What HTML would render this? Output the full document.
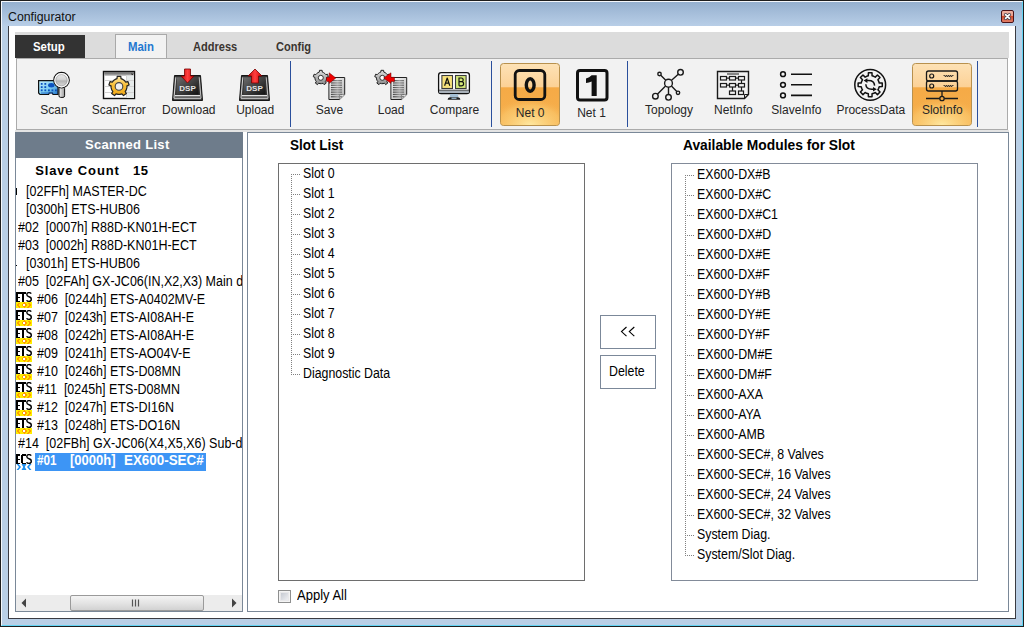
<!DOCTYPE html>
<html><head><meta charset="utf-8">
<style>
*{margin:0;padding:0;box-sizing:border-box}
html,body{width:1024px;height:627px;overflow:hidden;background:#b9cfe6;font-family:"Liberation Sans",sans-serif}
.a{position:absolute}
#win{position:absolute;left:0;top:0;width:1024px;height:627px;border:1px solid #1e1e1e;background:#b9cfe6}
#hl{position:absolute;left:1px;top:1px;width:1022px;height:625px;border-top:1px solid #f4f7fb;border-left:1px solid #f4f7fb;border-right:1px solid #62d4f4;border-bottom:1px solid #62d4f4;border-image:none}
#title{position:absolute;left:2px;top:2px;width:1020px;height:24px;background:linear-gradient(#95b0cf,#b8cee7)}
#client{position:absolute;left:8px;top:26px;width:1008px;height:593px;background:#fff;border-left:1px solid #3a3b42;border-right:1px solid #3a3b42;border-bottom:1px solid #3a3b42}
.t{position:absolute;white-space:pre;line-height:1}
.lbl{position:absolute;white-space:pre;font-size:12px;color:#262626;line-height:1;transform:translateX(-50%)}
.list{font-size:12px;color:#000}
.sep{position:absolute;width:1px;background:#2c4d96}
.li{font-size:14px;color:#000;transform:scaleX(0.882);transform-origin:0 0}
.ic{position:absolute;width:16px;height:17px;overflow:hidden}
.ic span{position:absolute;left:0;top:-1px;font:bold 11px "Liberation Sans",sans-serif;letter-spacing:-1px;transform:scaleX(0.85) scaleY(1.0);transform-origin:0 0;color:#000;line-height:1}
.ets i{position:absolute;left:0;top:10px;width:16px;height:6px;background:radial-gradient(circle at 50% 50%,#fff 0,#fff 1.4px,#ffa000 1.6px,#ffa000 2.6px,#ffea00 2.8px)}
.ecs i{position:absolute;left:0;top:10px;width:16px;height:6px;background:linear-gradient(90deg,#3aa0e8,#9fd0f5,#3aa0e8,#9fd0f5,#3aa0e8)}
.dh{position:absolute;width:9px;height:1px;background:repeating-linear-gradient(90deg,#808080 0 1px,transparent 1px 2px)}
.dv{position:absolute;width:1px;background:repeating-linear-gradient(180deg,#808080 0 1px,transparent 1px 2px)}
.btn{border:1px solid #7b8899;background:#fff}
.btn span{position:absolute;left:0;right:0;text-align:center;font-size:13px;line-height:1;color:#000}
</style></head><body>
<div id="win"></div>
<div id="hl"></div>
<div id="title"></div>
<div class="t" style="left:8px;top:11px;font-size:12.3px;color:#111">Configurator</div>
<!-- close button -->
<div class="a" style="left:1001px;top:10px;width:13px;height:13px;border:1px solid #4a1218;border-radius:2px;background:linear-gradient(#f0b3a4 0,#e99a86 45%,#cf4a2c 50%,#e0806a 100%)"></div>
<svg class="a" style="left:1001px;top:10px" width="13" height="13"><path d="M4.6 4.6L8.4 8.4M8.4 4.6L4.6 8.4" stroke="#3b3b4a" stroke-width="3.2" stroke-linecap="round"/><path d="M4.6 4.6L8.4 8.4M8.4 4.6L4.6 8.4" stroke="#fff" stroke-width="1.7" stroke-linecap="round"/></svg>

<div id="client"></div>

<!-- tab strip -->
<div class="a" style="left:15px;top:32px;width:994px;height:26px;background:#dcdcdc"></div>
<div class="a" style="left:15px;top:35px;width:70px;height:23px;background:#333"></div>
<div class="t" style="left:33px;top:41px;font-size:12px;font-weight:bold;color:#fff;transform:scaleX(0.95);transform-origin:0 0">Setup</div>
<div class="a" style="left:115px;top:34px;width:52px;height:25px;background:#f2f2f2;border:1px solid #a9a9a9;border-bottom:none"></div>
<div class="t" style="left:128px;top:41px;font-size:12px;font-weight:bold;color:#1f78d0;transform:scaleX(0.95);transform-origin:0 0">Main</div>
<div class="t" style="left:193px;top:41px;font-size:12px;font-weight:bold;color:#3a3530;transform:scaleX(0.92);transform-origin:0 0">Address</div>
<div class="t" style="left:276px;top:41px;font-size:12px;font-weight:bold;color:#3a3530;transform:scaleX(0.92);transform-origin:0 0">Config</div>

<!-- toolbar -->
<div class="a" style="left:16px;top:58px;width:992px;height:72px;background:#f2f2f2;border:1px solid #ababab"></div>
<div class="a" style="left:15px;top:130px;width:994px;height:2px;background:#e4e4e4"></div>

<svg class="a" style="left:0;top:0" width="1024" height="135" viewBox="0 0 1024 135">
<defs>
 <linearGradient id="card" x1="0" y1="0" x2="1" y2="1"><stop offset="0" stop-color="#c6f0fc"/><stop offset="0.55" stop-color="#7cccf0"/><stop offset="1" stop-color="#1f6fc8"/></linearGradient>
 <linearGradient id="lens" x1="0" y1="0" x2="0" y2="1"><stop offset="0" stop-color="#f4f4f4"/><stop offset="0.45" stop-color="#d4d4d4"/><stop offset="0.55" stop-color="#b4b4b4"/><stop offset="1" stop-color="#e8e8e8"/></linearGradient>
 <linearGradient id="hdl" x1="0" y1="0" x2="1" y2="0"><stop offset="0" stop-color="#f4f4f4"/><stop offset="1" stop-color="#9a9a9a"/></linearGradient>
 <linearGradient id="gearo" x1="0" y1="0" x2="0" y2="1"><stop offset="0" stop-color="#ffe9a8"/><stop offset="0.45" stop-color="#f8bf38"/><stop offset="1" stop-color="#f0a818"/></linearGradient>
 <linearGradient id="hdr" x1="0" y1="0" x2="0" y2="1"><stop offset="0" stop-color="#5a5a5a"/><stop offset="1" stop-color="#bdbdbd"/></linearGradient>
 <linearGradient id="key" x1="0" y1="0" x2="1" y2="1"><stop offset="0" stop-color="#6e6e6e"/><stop offset="0.55" stop-color="#3c3c3c"/><stop offset="1" stop-color="#101010"/></linearGradient>
 <linearGradient id="arr" x1="0" y1="0" x2="1" y2="0"><stop offset="0" stop-color="#c00000"/><stop offset="0.5" stop-color="#ff4040"/><stop offset="1" stop-color="#d00000"/></linearGradient>
 <linearGradient id="gearg" x1="0" y1="0" x2="0" y2="1"><stop offset="0" stop-color="#e0e0e0"/><stop offset="1" stop-color="#8a8a8a"/></linearGradient>
 <linearGradient id="doc" x1="0" y1="0" x2="1" y2="1"><stop offset="0" stop-color="#ffffff"/><stop offset="1" stop-color="#b0b0b0"/></linearGradient>
 <linearGradient id="lines" x1="0" y1="0" x2="1" y2="0"><stop offset="0" stop-color="#444"/><stop offset="0.6" stop-color="#999"/><stop offset="1" stop-color="#666"/></linearGradient>
 <linearGradient id="orng" x1="0" y1="0" x2="0" y2="1"><stop offset="0" stop-color="#fde2b6"/><stop offset="0.38" stop-color="#fcd196"/><stop offset="0.39" stop-color="#f5aa46"/><stop offset="1" stop-color="#f6b04e"/></linearGradient>
 <radialGradient id="glow" cx="0.5" cy="1" r="0.75"><stop offset="0" stop-color="#ffe8a0" stop-opacity="1"/><stop offset="0.7" stop-color="#fcd27a" stop-opacity="0.45"/><stop offset="1" stop-color="#f5aa46" stop-opacity="0"/></radialGradient>
</defs>
<!-- separators -->
<g fill="#2a4f9c"><rect x="290" y="61" width="1" height="66"/><rect x="491" y="61" width="1" height="66"/><rect x="627" y="61" width="1" height="66"/><rect x="977" y="61" width="1" height="66"/></g>

<!-- Scan -->
<g>
 <path d="M38.6 80.6 H58 V94.5 H53 L52.3 93 H49.3 L48.6 94.5 H40 L38.6 93 Z" fill="url(#card)" stroke="#111" stroke-width="1.2"/>
 <g fill="#0a52c0"><rect x="40.8" y="83" width="1.8" height="1.8"/><rect x="40.8" y="86.2" width="1.8" height="1.8"/><rect x="40.8" y="89.4" width="1.8" height="1.8"/><rect x="44.4" y="83" width="1.8" height="1.8"/><rect x="44.4" y="86.2" width="1.8" height="1.8"/><rect x="44.4" y="89.4" width="1.8" height="1.8"/><ellipse cx="51.3" cy="85.3" rx="3.2" ry="2.2"/><rect x="48" y="89.4" width="1.8" height="1.8"/><rect x="51.5" y="89.4" width="1.8" height="1.8"/><rect x="55" y="89.4" width="1.8" height="1.8"/><rect x="41" y="92.3" width="12" height="1.5" opacity="0.5"/></g>
 <rect x="59" y="87" width="5.6" height="10.4" rx="1.6" fill="url(#hdl)" stroke="#111" stroke-width="1"/>
 <circle cx="61.5" cy="80.2" r="7.8" fill="url(#lens)" stroke="#151515" stroke-width="1.1"/>
 <circle cx="61.5" cy="80.2" r="6.6" fill="none" stroke="#fafafa" stroke-width="1.2"/>
 <circle cx="61.5" cy="80.2" r="5.6" fill="none" stroke="#9a9a9a" stroke-width="0.6"/>
</g>

<!-- ScanError -->
<g>
 <rect x="103.5" y="71.5" width="31" height="27" fill="#fff" stroke="#111" stroke-width="1.4"/>
 <rect x="104.2" y="72.2" width="29.6" height="3.6" fill="url(#hdr)"/>
 <rect x="126.5" y="75.5" width="7.5" height="22.5" fill="#e6eaea"/>
 <g stroke="#d2d2d2" stroke-width="1"><path d="M104 80.5H134M104 86.5H134M104 92.5H134M126.5 75V98"/></g>
 <path d="M131.5 73.5 l1.5 1.5 m0 -1.5 l-1.5 1.5" stroke="#222" stroke-width="0.8"/>
 <path d="M115.15 79.39 L117.01 78.65 L117.21 76.36 L120.79 76.36 L120.99 78.65 L122.85 79.39 L124.48 80.57 L125.75 82.11 L128.00 81.60 L129.10 84.99 L126.98 85.90 L126.86 87.90 L126.24 89.81 L125.16 91.50 L126.35 93.48 L123.46 95.57 L121.94 93.84 L120.00 94.34 L118.00 94.34 L116.06 93.84 L114.54 95.57 L111.65 93.48 L112.84 91.50 L111.76 89.81 L111.14 87.90 L111.02 85.90 L108.90 84.99 L110.00 81.60 L112.25 82.11 L113.52 80.57 Z" fill="url(#gearo)" stroke="#222" stroke-width="1.2" stroke-linejoin="round"/>
 <circle cx="119" cy="86.4" r="3.8" fill="#f0f0f0" stroke="#444" stroke-width="1.1"/>
</g>

<!-- Download keycap -->
<g id="kc">
 <path d="M172.5 100.5 L174.5 75.5 H200.5 L202.5 100.5 Z" fill="#333" stroke="#151515" stroke-width="1"/>
 <path d="M175.8 77.2 L174 98.2" stroke="#d0d0d0" stroke-width="1.1"/>
 <path d="M199.2 77.2 L201 98.2" stroke="#bdbdbd" stroke-width="1.1"/>
 <rect x="175" y="95" width="25" height="1.4" fill="#e2e2e2"/>
 <rect x="174" y="97.6" width="27" height="1.6" fill="#b4b4b4"/>
 <path d="M177 77.3 H198 L198.6 94.6 H176.4 Z" fill="url(#key)"/>
 <text x="187.5" y="91" font-family="Liberation Sans" font-weight="bold" font-size="8" fill="#e4e4e4" text-anchor="middle">DSP</text>
</g>
<path d="M184.5 69 H190.5 V76 H194 L187.5 83 L181 76 H184.5 Z" fill="url(#arr)" stroke="#700" stroke-width="0.8"/>

<!-- Upload keycap -->
<g transform="translate(67 0)">
 <path d="M172.5 100.5 L174.5 75.5 H200.5 L202.5 100.5 Z" fill="#333" stroke="#151515" stroke-width="1"/>
 <path d="M175.8 77.2 L174 98.2" stroke="#d0d0d0" stroke-width="1.1"/>
 <path d="M199.2 77.2 L201 98.2" stroke="#bdbdbd" stroke-width="1.1"/>
 <rect x="175" y="95" width="25" height="1.4" fill="#e2e2e2"/>
 <rect x="174" y="97.6" width="27" height="1.6" fill="#b4b4b4"/>
 <path d="M177 77.3 H198 L198.6 94.6 H176.4 Z" fill="url(#key)"/>
 <text x="187.5" y="91" font-family="Liberation Sans" font-weight="bold" font-size="8" fill="#e4e4e4" text-anchor="middle">DSP</text>
</g>
<path d="M251.5 83 H258.5 V76 H262 L255 69 L248 76 H251.5 Z" fill="url(#arr)" stroke="#700" stroke-width="0.8"/>

<!-- Save -->
<g>
 <path d="M317.96 72.63 L319.33 72.09 L319.47 70.32 L322.13 70.32 L322.27 72.09 L323.64 72.63 L324.84 73.50 L325.78 74.64 L327.51 74.22 L328.33 76.75 L326.69 77.43 L326.60 78.91 L326.14 80.31 L325.35 81.56 L326.27 83.07 L324.12 84.64 L322.97 83.29 L321.54 83.65 L320.06 83.65 L318.63 83.29 L317.48 84.64 L315.33 83.07 L316.25 81.56 L315.46 80.31 L315.00 78.91 L314.91 77.43 L313.27 76.75 L314.09 74.22 L315.82 74.64 L316.76 73.50 Z" fill="url(#gearg)" stroke="#222" stroke-width="1" stroke-linejoin="round"/>
 <circle cx="320.8" cy="77.8" r="2.5" fill="#fff" stroke="#222" stroke-width="0.9"/>
 <path d="M328.9 77.5 H344.7 V94.6 L339.59999999999997 99.5 H328.9 Z" fill="url(#doc)" stroke="#222" stroke-width="1"/>
 <path d="M339.59999999999997 99.5 V94.6 H344.7" fill="#e8e8e8" stroke="#555" stroke-width="0.6"/>
 <g fill="url(#lines)"><rect x="330.9" y="80.0" width="11" height="1.3"/><rect x="330.9" y="82.3" width="11" height="1.3"/><rect x="330.9" y="84.6" width="11" height="1.3"/><rect x="330.9" y="86.9" width="11" height="1.3"/><rect x="330.9" y="89.2" width="11" height="1.3"/><rect x="330.9" y="91.5" width="11" height="1.3"/><rect x="330.9" y="93.8" width="11" height="1.3"/><rect x="330.9" y="96.1" width="11" height="1.3"/></g>
 <path d="M326.5 77.3 H329.2 V72.8 L335.8 78 L329.2 83.4 V81.5 H326.5 Z" fill="#ee0000" stroke="#600" stroke-width="0.5"/>
</g>

<!-- Load -->
<g>
 <path d="M379.46 72.63 L380.83 72.09 L380.97 70.32 L383.63 70.32 L383.77 72.09 L385.14 72.63 L386.34 73.50 L387.28 74.64 L389.01 74.22 L389.83 76.75 L388.19 77.43 L388.10 78.91 L387.64 80.31 L386.85 81.56 L387.77 83.07 L385.62 84.64 L384.47 83.29 L383.04 83.65 L381.56 83.65 L380.13 83.29 L378.98 84.64 L376.83 83.07 L377.75 81.56 L376.96 80.31 L376.50 78.91 L376.41 77.43 L374.77 76.75 L375.59 74.22 L377.32 74.64 L378.26 73.50 Z" fill="url(#gearg)" stroke="#222" stroke-width="1" stroke-linejoin="round"/>
 <circle cx="382.3" cy="77.8" r="2.5" fill="#fff" stroke="#222" stroke-width="0.9"/>
 <path d="M390.9 77.5 H406.7 V94.6 L401.59999999999997 99.5 H390.9 Z" fill="url(#doc)" stroke="#222" stroke-width="1"/>
 <path d="M401.59999999999997 99.5 V94.6 H406.7" fill="#e8e8e8" stroke="#555" stroke-width="0.6"/>
 <g fill="url(#lines)"><rect x="392.9" y="80.0" width="11" height="1.3"/><rect x="392.9" y="82.3" width="11" height="1.3"/><rect x="392.9" y="84.6" width="11" height="1.3"/><rect x="392.9" y="86.9" width="11" height="1.3"/><rect x="392.9" y="89.2" width="11" height="1.3"/><rect x="392.9" y="91.5" width="11" height="1.3"/><rect x="392.9" y="93.8" width="11" height="1.3"/><rect x="392.9" y="96.1" width="11" height="1.3"/></g>
 <path d="M394.5 77.3 H391 V72.8 L383.6 78 L391 83.4 V81.5 H394.5 Z" fill="#ee0000" stroke="#600" stroke-width="0.5"/>
</g>

<!-- Compare -->
<g>
 <rect x="438.6" y="72.6" width="30.8" height="21" rx="2.6" fill="#fff" stroke="#111" stroke-width="1.3"/>
 <rect x="439.3" y="90.4" width="29.4" height="2.6" fill="#a9b1b9"/>
 <path d="M439 90.2 H469" stroke="#222" stroke-width="0.8"/>
 <rect x="441.9" y="75.5" width="10.6" height="13" fill="#f7e27c" stroke="#3a3a3a" stroke-width="1.1"/>
 <rect x="455.5" y="75.5" width="10.6" height="13" fill="#d3e87a" stroke="#3a3a3a" stroke-width="1.1"/>
 <path d="M444.6 85.8 L447.2 78 L449.8 85.8 M445.5 83.2 H448.9" stroke="#111" stroke-width="1.2" fill="none" stroke-linejoin="round"/>
 <path d="M459 85.8 V78 H461.3 Q463.2 78 463.2 79.9 Q463.2 81.7 461.3 81.7 H459 M461.3 81.7 Q463.6 81.7 463.6 83.7 Q463.6 85.8 461.3 85.8 H459" stroke="#111" stroke-width="1.2" fill="none"/>
 <path d="M450.3 94 H457.8 L458.6 97.5 H449.5 Z" fill="#a6c0d4"/>
 <path d="M447.6 99.8 Q447.6 97.3 450 97.3 H458 Q460.4 97.3 460.4 99.8 Z" fill="#1e1e1e"/>
 <rect x="451.5" y="97.6" width="5" height="1.4" fill="#8ea8bc"/>
</g>

<!-- Net 0 button -->
<rect x="500.5" y="63.5" width="59" height="62" rx="3" fill="url(#orng)" stroke="#b8914e" stroke-width="1"/>
<rect x="501" y="88" width="58" height="37" rx="2" fill="url(#glow)"/>
<rect x="515.2" y="70.5" width="29.6" height="29" rx="4" fill="none" stroke="#111" stroke-width="2.8"/>
<ellipse cx="530.2" cy="85" rx="3.9" ry="6.3" fill="none" stroke="#111" stroke-width="3.4"/>

<!-- Net 1 -->
<rect x="577.5" y="70.5" width="29.5" height="29.5" rx="2.5" fill="none" stroke="#111" stroke-width="3"/>
<path d="M591.6 75.3 H596.7 V95.9 H591.6 V81.5 Q589 82.6 586 83 V78.6 Q589.5 77.6 591.6 75.3 Z" fill="#111"/>

<!-- Topology -->
<g stroke="#1a1a1a" stroke-width="1.4" fill="none">
 <path d="M668.5 83 L680.5 72.3 M668.5 83 L659.5 74 M668.5 83 L655.4 96.2 M668.5 83 L668.5 97.3 M668.5 83 L678 92.8"/>
 <circle cx="668.5" cy="83.2" r="3.9" fill="#f2f2f2"/>
 <circle cx="680.5" cy="72.3" r="2.8" fill="#f2f2f2"/>
 <circle cx="659.5" cy="74" r="1.7" fill="#f2f2f2"/>
 <circle cx="655.4" cy="96.2" r="2.8" fill="#f2f2f2"/>
 <circle cx="668.5" cy="97.3" r="2.8" fill="#f2f2f2"/>
 <circle cx="678" cy="92.8" r="1.7" fill="#f2f2f2"/>
</g>

<!-- NetInfo -->
<g stroke="#1a1a1a" fill="none">
 <path d="M717.5 71.5 H748.5 V94.5 L744.5 98.5 H717.5 Z" stroke-width="1.4"/>
 <path d="M744.5 98.5 V94.5 H748.5" stroke-width="1"/>
 <g stroke-width="1.2">
  <rect x="720.5" y="76.5" width="6" height="3.5"/><rect x="729.5" y="76.5" width="6" height="3.5"/><rect x="738.5" y="76.5" width="6" height="3.5"/>
  <rect x="720.5" y="83.5" width="6" height="3.5"/><rect x="729.5" y="83.5" width="6" height="3.5"/><rect x="738.5" y="83.5" width="6" height="3.5"/>
  <rect x="729.5" y="91" width="6" height="3.5"/><rect x="738.5" y="91" width="5" height="3.5"/>
  <path d="M726.5 78.2H729.5M735.5 78.2H738.5M726.5 85.2H729.5M735.5 85.2H738.5M741.5 80V83.5M732.5 87V91M741.5 87V91M727 74H739"/>
 </g>
</g>

<!-- SlaveInfo -->
<g stroke="#111" stroke-width="1.5" fill="none">
 <circle cx="783" cy="74.2" r="2.4"/><circle cx="783" cy="84.8" r="2.4"/><circle cx="783" cy="95.4" r="2.4"/>
 <path d="M791 74.2H812M791 84.8H812M791 95.4H812" stroke-width="1.6"/>
</g>

<!-- ProcessData -->
<g stroke="#111" fill="none">
 <circle cx="870.2" cy="84.8" r="15.4" stroke-width="1.5"/>
 <path d="M866.68 76.30 L868.33 75.79 L868.39 72.74 L872.01 72.74 L872.07 75.79 L873.72 76.30 L875.25 77.11 L877.45 74.99 L880.01 77.55 L877.89 79.75 L878.70 81.28 L879.21 82.93 L882.26 82.99 L882.26 86.61 L879.21 86.67 L878.70 88.32 L877.89 89.85 L880.01 92.05 L877.45 94.61 L875.25 92.49 L873.72 93.30 L872.07 93.81 L872.01 96.86 L868.39 96.86 L868.33 93.81 L866.68 93.30 L865.15 92.49 L862.95 94.61 L860.39 92.05 L862.51 89.85 L861.70 88.32 L861.19 86.67 L858.14 86.61 L858.14 82.99 L861.19 82.93 L861.70 81.28 L862.51 79.75 L860.39 77.55 L862.95 74.99 L865.15 77.11 Z" stroke-width="1.5" stroke-linejoin="round"/>
 <path d="M874.6 85.6 Q874.3 80.6 868.6 80.6 H866.5" stroke-width="1.5"/>
 <path d="M865.8 84.2 Q866.1 89.2 871.8 89.2 H873.9" stroke-width="1.5"/>
 <path d="M863.6 80.6 L867.4 78.3 V82.9 Z M876.8 89.2 L873 86.9 V91.5 Z" fill="#111" stroke="none"/>
</g>

<!-- SlotInfo button -->
<rect x="912.5" y="63.5" width="59" height="62" rx="3" fill="url(#orng)" stroke="#b8914e" stroke-width="1"/>
<rect x="913" y="88" width="58" height="37" rx="2" fill="url(#glow)"/>
<g stroke="#1a1a1a" fill="none" stroke-width="1.3">
 <rect x="926.5" y="71" width="31" height="10" rx="2"/>
 <rect x="926.5" y="81" width="31" height="10" rx="2"/>
 <circle cx="931.7" cy="76" r="2" stroke-width="1.2"/><circle cx="931.7" cy="86" r="2" stroke-width="1.2"/>
 <path d="M943.5 76 l1 -1 l1 2 l1 -2 l1 2 l1 -2 l1 2 l1 -2 l1 2 l1 -2 l1 1 M943.5 86 l1 -1 l1 2 l1 -2 l1 2 l1 -2 l1 2 l1 -2 l1 2 l1 -2 l1 1" stroke-width="0.8"/>
 <path d="M942 91V96M926 98.5H939.7M944.3 98.5H958"/>
 <circle cx="942" cy="98.5" r="2.2"/>
</g>
</svg>


<!-- scanned list -->
<div class="a" style="left:15px;top:132px;width:228px;height:480px;border:1px solid #7a8898;background:#fff"></div>
<div class="a" style="left:15px;top:132px;width:228px;height:26px;background:#6e7c8b"></div>
<div class="t" style="left:85px;top:138px;font-size:13px;font-weight:bold;color:#fff;letter-spacing:0.3px">Scanned List</div>

<!-- right panel -->
<div class="a" style="left:247px;top:132px;width:762px;height:480px;border:1px solid #7a8898;background:#fff"></div>

<div class="lbl" style="left:53.9px;top:104px">Scan</div>
<div class="lbl" style="left:118.8px;top:104px">ScanError</div>
<div class="lbl" style="left:188.8px;top:104px">Download</div>
<div class="lbl" style="left:255.2px;top:104px">Upload</div>
<div class="lbl" style="left:329.5px;top:104px">Save</div>
<div class="lbl" style="left:391.1px;top:104px">Load</div>
<div class="lbl" style="left:454.5px;top:104px">Compare</div>
<div class="lbl" style="left:530.2px;top:107px">Net 0</div>
<div class="lbl" style="left:591.5px;top:107px">Net 1</div>
<div class="lbl" style="left:669px;top:104px">Topology</div>
<div class="lbl" style="left:733.4px;top:104px">NetInfo</div>
<div class="lbl" style="left:796.4px;top:104px">SlaveInfo</div>
<div class="lbl" style="left:870.8px;top:104px">ProcessData</div>
<div class="lbl" style="left:942.3px;top:104px">SlotInfo</div>
<div class="a" style="left:16px;top:133px;width:226px;height:462px;overflow:hidden">
<div class="t" style="left:19.2px;top:31px;font-size:13px;font-weight:bold;color:#000;letter-spacing:0.85px">Slave Count</div><div class="t" style="left:117px;top:31px;font-size:13px;font-weight:bold;color:#000;letter-spacing:0.5px">15</div>
<div class="t li" style="left:10.4px;top:51px;color:#000;transform:scaleX(0.893)">[02FFh] MASTER-DC</div>
<div class="t li" style="left:10.4px;top:69px;color:#000;transform:scaleX(0.893)">[0300h] ETS-HUB06</div>
<div class="t li" style="left:2px;top:87px;color:#000;transform:scaleX(0.893)">#02  [0007h] R88D-KN01H-ECT</div>
<div class="t li" style="left:2px;top:105px;color:#000;transform:scaleX(0.893)">#03  [0002h] R88D-KN01H-ECT</div>
<div class="t li" style="left:10.4px;top:123px;color:#000;transform:scaleX(0.893)">[0301h] ETS-HUB06</div>
<div class="t li" style="left:2px;top:141px;color:#000;transform:scaleX(0.893)">#05  [02FAh] GX-JC06(IN,X2,X3) Main device</div>
<svg class="a" style="left:0;top:159px" width="16" height="16" shape-rendering="crispEdges"><g fill="#000"><rect x="0" y="0" width="2" height="10"/><rect x="0" y="0" width="4" height="1.5"/><rect x="0" y="4.5" width="3.5" height="1"/><rect x="0" y="8.5" width="4" height="1.5"/><rect x="4" y="0" width="6" height="1.5"/><rect x="6" y="0" width="2" height="10"/></g><path d="M15.2 1.6 Q14.6 0.6 13 0.6 Q10.8 0.6 10.8 2.6 Q10.8 4.3 13 4.8 Q15.3 5.3 15.3 7.3 Q15.3 9.4 13 9.4 Q11.2 9.4 10.6 8.2" fill="none" stroke="#000" stroke-width="1.4" shape-rendering="auto"/><g></g><rect x="0" y="10" width="16" height="6" fill="#ffee00"/><g fill="#ffa000"><path d="M3 10.5 L1 13 L3 15.5 H4.5 L2.5 13 L4.5 10.5Z"/><path d="M8 10 L11 13 L8 16 L5 13Z"/><path d="M13 10.5 L15 13 L13 15.5 H11.5 L13.5 13 L11.5 10.5Z"/></g><rect x="7" y="12" width="2" height="2" fill="#fff"/></svg>
<div class="t li" style="left:21px;top:159px;color:#000;transform:scaleX(0.893)">#06  [0244h] ETS-A0402MV-E</div>
<svg class="a" style="left:0;top:177px" width="16" height="16" shape-rendering="crispEdges"><g fill="#000"><rect x="0" y="0" width="2" height="10"/><rect x="0" y="0" width="4" height="1.5"/><rect x="0" y="4.5" width="3.5" height="1"/><rect x="0" y="8.5" width="4" height="1.5"/><rect x="4" y="0" width="6" height="1.5"/><rect x="6" y="0" width="2" height="10"/></g><path d="M15.2 1.6 Q14.6 0.6 13 0.6 Q10.8 0.6 10.8 2.6 Q10.8 4.3 13 4.8 Q15.3 5.3 15.3 7.3 Q15.3 9.4 13 9.4 Q11.2 9.4 10.6 8.2" fill="none" stroke="#000" stroke-width="1.4" shape-rendering="auto"/><g></g><rect x="0" y="10" width="16" height="6" fill="#ffee00"/><g fill="#ffa000"><path d="M3 10.5 L1 13 L3 15.5 H4.5 L2.5 13 L4.5 10.5Z"/><path d="M8 10 L11 13 L8 16 L5 13Z"/><path d="M13 10.5 L15 13 L13 15.5 H11.5 L13.5 13 L11.5 10.5Z"/></g><rect x="7" y="12" width="2" height="2" fill="#fff"/></svg>
<div class="t li" style="left:21px;top:177px;color:#000;transform:scaleX(0.893)">#07  [0243h] ETS-AI08AH-E</div>
<svg class="a" style="left:0;top:195px" width="16" height="16" shape-rendering="crispEdges"><g fill="#000"><rect x="0" y="0" width="2" height="10"/><rect x="0" y="0" width="4" height="1.5"/><rect x="0" y="4.5" width="3.5" height="1"/><rect x="0" y="8.5" width="4" height="1.5"/><rect x="4" y="0" width="6" height="1.5"/><rect x="6" y="0" width="2" height="10"/></g><path d="M15.2 1.6 Q14.6 0.6 13 0.6 Q10.8 0.6 10.8 2.6 Q10.8 4.3 13 4.8 Q15.3 5.3 15.3 7.3 Q15.3 9.4 13 9.4 Q11.2 9.4 10.6 8.2" fill="none" stroke="#000" stroke-width="1.4" shape-rendering="auto"/><g></g><rect x="0" y="10" width="16" height="6" fill="#ffee00"/><g fill="#ffa000"><path d="M3 10.5 L1 13 L3 15.5 H4.5 L2.5 13 L4.5 10.5Z"/><path d="M8 10 L11 13 L8 16 L5 13Z"/><path d="M13 10.5 L15 13 L13 15.5 H11.5 L13.5 13 L11.5 10.5Z"/></g><rect x="7" y="12" width="2" height="2" fill="#fff"/></svg>
<div class="t li" style="left:21px;top:195px;color:#000;transform:scaleX(0.893)">#08  [0242h] ETS-AI08AH-E</div>
<svg class="a" style="left:0;top:213px" width="16" height="16" shape-rendering="crispEdges"><g fill="#000"><rect x="0" y="0" width="2" height="10"/><rect x="0" y="0" width="4" height="1.5"/><rect x="0" y="4.5" width="3.5" height="1"/><rect x="0" y="8.5" width="4" height="1.5"/><rect x="4" y="0" width="6" height="1.5"/><rect x="6" y="0" width="2" height="10"/></g><path d="M15.2 1.6 Q14.6 0.6 13 0.6 Q10.8 0.6 10.8 2.6 Q10.8 4.3 13 4.8 Q15.3 5.3 15.3 7.3 Q15.3 9.4 13 9.4 Q11.2 9.4 10.6 8.2" fill="none" stroke="#000" stroke-width="1.4" shape-rendering="auto"/><g></g><rect x="0" y="10" width="16" height="6" fill="#ffee00"/><g fill="#ffa000"><path d="M3 10.5 L1 13 L3 15.5 H4.5 L2.5 13 L4.5 10.5Z"/><path d="M8 10 L11 13 L8 16 L5 13Z"/><path d="M13 10.5 L15 13 L13 15.5 H11.5 L13.5 13 L11.5 10.5Z"/></g><rect x="7" y="12" width="2" height="2" fill="#fff"/></svg>
<div class="t li" style="left:21px;top:213px;color:#000;transform:scaleX(0.893)">#09  [0241h] ETS-AO04V-E</div>
<svg class="a" style="left:0;top:231px" width="16" height="16" shape-rendering="crispEdges"><g fill="#000"><rect x="0" y="0" width="2" height="10"/><rect x="0" y="0" width="4" height="1.5"/><rect x="0" y="4.5" width="3.5" height="1"/><rect x="0" y="8.5" width="4" height="1.5"/><rect x="4" y="0" width="6" height="1.5"/><rect x="6" y="0" width="2" height="10"/></g><path d="M15.2 1.6 Q14.6 0.6 13 0.6 Q10.8 0.6 10.8 2.6 Q10.8 4.3 13 4.8 Q15.3 5.3 15.3 7.3 Q15.3 9.4 13 9.4 Q11.2 9.4 10.6 8.2" fill="none" stroke="#000" stroke-width="1.4" shape-rendering="auto"/><g></g><rect x="0" y="10" width="16" height="6" fill="#ffee00"/><g fill="#ffa000"><path d="M3 10.5 L1 13 L3 15.5 H4.5 L2.5 13 L4.5 10.5Z"/><path d="M8 10 L11 13 L8 16 L5 13Z"/><path d="M13 10.5 L15 13 L13 15.5 H11.5 L13.5 13 L11.5 10.5Z"/></g><rect x="7" y="12" width="2" height="2" fill="#fff"/></svg>
<div class="t li" style="left:21px;top:231px;color:#000;transform:scaleX(0.893)">#10  [0246h] ETS-D08MN</div>
<svg class="a" style="left:0;top:249px" width="16" height="16" shape-rendering="crispEdges"><g fill="#000"><rect x="0" y="0" width="2" height="10"/><rect x="0" y="0" width="4" height="1.5"/><rect x="0" y="4.5" width="3.5" height="1"/><rect x="0" y="8.5" width="4" height="1.5"/><rect x="4" y="0" width="6" height="1.5"/><rect x="6" y="0" width="2" height="10"/></g><path d="M15.2 1.6 Q14.6 0.6 13 0.6 Q10.8 0.6 10.8 2.6 Q10.8 4.3 13 4.8 Q15.3 5.3 15.3 7.3 Q15.3 9.4 13 9.4 Q11.2 9.4 10.6 8.2" fill="none" stroke="#000" stroke-width="1.4" shape-rendering="auto"/><g></g><rect x="0" y="10" width="16" height="6" fill="#ffee00"/><g fill="#ffa000"><path d="M3 10.5 L1 13 L3 15.5 H4.5 L2.5 13 L4.5 10.5Z"/><path d="M8 10 L11 13 L8 16 L5 13Z"/><path d="M13 10.5 L15 13 L13 15.5 H11.5 L13.5 13 L11.5 10.5Z"/></g><rect x="7" y="12" width="2" height="2" fill="#fff"/></svg>
<div class="t li" style="left:21px;top:249px;color:#000;transform:scaleX(0.893)">#11  [0245h] ETS-D08MN</div>
<svg class="a" style="left:0;top:267px" width="16" height="16" shape-rendering="crispEdges"><g fill="#000"><rect x="0" y="0" width="2" height="10"/><rect x="0" y="0" width="4" height="1.5"/><rect x="0" y="4.5" width="3.5" height="1"/><rect x="0" y="8.5" width="4" height="1.5"/><rect x="4" y="0" width="6" height="1.5"/><rect x="6" y="0" width="2" height="10"/></g><path d="M15.2 1.6 Q14.6 0.6 13 0.6 Q10.8 0.6 10.8 2.6 Q10.8 4.3 13 4.8 Q15.3 5.3 15.3 7.3 Q15.3 9.4 13 9.4 Q11.2 9.4 10.6 8.2" fill="none" stroke="#000" stroke-width="1.4" shape-rendering="auto"/><g></g><rect x="0" y="10" width="16" height="6" fill="#ffee00"/><g fill="#ffa000"><path d="M3 10.5 L1 13 L3 15.5 H4.5 L2.5 13 L4.5 10.5Z"/><path d="M8 10 L11 13 L8 16 L5 13Z"/><path d="M13 10.5 L15 13 L13 15.5 H11.5 L13.5 13 L11.5 10.5Z"/></g><rect x="7" y="12" width="2" height="2" fill="#fff"/></svg>
<div class="t li" style="left:21px;top:267px;color:#000;transform:scaleX(0.893)">#12  [0247h] ETS-DI16N</div>
<svg class="a" style="left:0;top:285px" width="16" height="16" shape-rendering="crispEdges"><g fill="#000"><rect x="0" y="0" width="2" height="10"/><rect x="0" y="0" width="4" height="1.5"/><rect x="0" y="4.5" width="3.5" height="1"/><rect x="0" y="8.5" width="4" height="1.5"/><rect x="4" y="0" width="6" height="1.5"/><rect x="6" y="0" width="2" height="10"/></g><path d="M15.2 1.6 Q14.6 0.6 13 0.6 Q10.8 0.6 10.8 2.6 Q10.8 4.3 13 4.8 Q15.3 5.3 15.3 7.3 Q15.3 9.4 13 9.4 Q11.2 9.4 10.6 8.2" fill="none" stroke="#000" stroke-width="1.4" shape-rendering="auto"/><g></g><rect x="0" y="10" width="16" height="6" fill="#ffee00"/><g fill="#ffa000"><path d="M3 10.5 L1 13 L3 15.5 H4.5 L2.5 13 L4.5 10.5Z"/><path d="M8 10 L11 13 L8 16 L5 13Z"/><path d="M13 10.5 L15 13 L13 15.5 H11.5 L13.5 13 L11.5 10.5Z"/></g><rect x="7" y="12" width="2" height="2" fill="#fff"/></svg>
<div class="t li" style="left:21px;top:285px;color:#000;transform:scaleX(0.893)">#13  [0248h] ETS-DO16N</div>
<div class="t li" style="left:2px;top:303px;color:#000;transform:scaleX(0.893)">#14  [02FBh] GX-JC06(X4,X5,X6) Sub-device</div>
<svg class="a" style="left:0;top:321px" width="16" height="16" shape-rendering="crispEdges"><g fill="#000"><rect x="0" y="0" width="2" height="10"/><rect x="0" y="0" width="4" height="1.5"/><rect x="0" y="4.5" width="3.5" height="1"/><rect x="0" y="8.5" width="4" height="1.5"/><rect x="5" y="1" width="2" height="8"/><rect x="6" y="0" width="3.5" height="1.5"/><rect x="6" y="8.5" width="3.5" height="1.5"/></g><path d="M15.2 1.6 Q14.6 0.6 13 0.6 Q10.8 0.6 10.8 2.6 Q10.8 4.3 13 4.8 Q15.3 5.3 15.3 7.3 Q15.3 9.4 13 9.4 Q11.2 9.4 10.6 8.2" fill="none" stroke="#000" stroke-width="1.4" shape-rendering="auto"/><g></g><g fill="#1e8ff0" shape-rendering="auto"><path d="M0.5 10 H2.5 L5 13 L2.5 16 H0.5 L3 13Z"/><path d="M5.5 10 H10.5 L8.8 13 L10.5 16 H5.5 L7.2 13Z"/><path d="M15.5 10 H13.5 L11 13 L13.5 16 H15.5 L13 13Z"/></g></svg>
<div class="a" style="left:19px;top:320px;width:171px;height:18px;background:#3d95f5"></div>
<div class="t li" style="left:21.3px;top:320px;color:#fff;font-weight:bold;transform:scaleX(0.836)">#01</div><div class="t li" style="left:54px;top:320px;color:#fff;font-weight:bold;transform:scaleX(0.929)">[0000h]</div><div class="t li" style="left:107.7px;top:320px;color:#fff;font-weight:bold;transform:scaleX(0.956)">EX600-SEC#</div>
<div class="a" style="left:0;top:55px;width:1px;height:7px;background:#000"></div>
<div class="a" style="left:0;top:132px;width:1px;height:1px;background:#000"></div>
</div>
<div class="a" style="left:16px;top:595px;width:226px;height:16px;background:#ececec"></div>
<svg class="a" style="left:16px;top:595px" width="226" height="16"><path d="M5.5 8 L10 3.5 V12.5 Z" fill="#444"/><path d="M220.5 8 L216 3.5 V12.5 Z" fill="#444"/></svg>
<div class="a" style="left:70px;top:595px;width:134px;height:16px;border:1px solid #9a9a9a;border-radius:2px;background:linear-gradient(#f4f4f4,#e4e4e4 50%,#d2d2d2)"></div>
<svg class="a" style="left:131px;top:599px" width="10" height="8"><path d="M1.5 0.5V7.5M4.5 0.5V7.5M7.5 0.5V7.5" stroke="#555" stroke-width="1.2"/></svg>

<div class="t" style="left:289.7px;top:138px;font-size:14px;font-weight:bold;color:#000;transform:scaleX(0.965);transform-origin:0 0">Slot List</div>
<div class="t" style="left:682.6px;top:138px;font-size:14px;font-weight:bold;color:#000;transform:scaleX(0.985);transform-origin:0 0">Available Modules for Slot</div>
<div class="a" style="left:278px;top:163px;width:307px;height:418px;border:1px solid #6e6e6e;background:#fff"></div>
<div class="a" style="left:671px;top:163px;width:307px;height:418px;border:1px solid #828b99;background:#fff"></div>
<div class="t li" style="left:302.7px;top:166px">Slot 0</div>
<div class="dh" style="left:291px;top:174px"></div>
<div class="t li" style="left:302.7px;top:186px">Slot 1</div>
<div class="dh" style="left:291px;top:194px"></div>
<div class="t li" style="left:302.7px;top:206px">Slot 2</div>
<div class="dh" style="left:291px;top:214px"></div>
<div class="t li" style="left:302.7px;top:226px">Slot 3</div>
<div class="dh" style="left:291px;top:234px"></div>
<div class="t li" style="left:302.7px;top:246px">Slot 4</div>
<div class="dh" style="left:291px;top:254px"></div>
<div class="t li" style="left:302.7px;top:266px">Slot 5</div>
<div class="dh" style="left:291px;top:274px"></div>
<div class="t li" style="left:302.7px;top:286px">Slot 6</div>
<div class="dh" style="left:291px;top:294px"></div>
<div class="t li" style="left:302.7px;top:306px">Slot 7</div>
<div class="dh" style="left:291px;top:314px"></div>
<div class="t li" style="left:302.7px;top:326px">Slot 8</div>
<div class="dh" style="left:291px;top:334px"></div>
<div class="t li" style="left:302.7px;top:346px">Slot 9</div>
<div class="dh" style="left:291px;top:354px"></div>
<div class="t li" style="left:302.7px;top:366px">Diagnostic Data</div>
<div class="dh" style="left:291px;top:374px"></div>
<div class="dv" style="left:291px;top:174px;height:201px"></div>
<div class="t li" style="left:696.9px;top:167px">EX600-DX#B</div>
<div class="dh" style="left:685px;top:175px"></div>
<div class="t li" style="left:696.9px;top:187px">EX600-DX#C</div>
<div class="dh" style="left:685px;top:195px"></div>
<div class="t li" style="left:696.9px;top:207px">EX600-DX#C1</div>
<div class="dh" style="left:685px;top:215px"></div>
<div class="t li" style="left:696.9px;top:227px">EX600-DX#D</div>
<div class="dh" style="left:685px;top:235px"></div>
<div class="t li" style="left:696.9px;top:247px">EX600-DX#E</div>
<div class="dh" style="left:685px;top:255px"></div>
<div class="t li" style="left:696.9px;top:267px">EX600-DX#F</div>
<div class="dh" style="left:685px;top:275px"></div>
<div class="t li" style="left:696.9px;top:287px">EX600-DY#B</div>
<div class="dh" style="left:685px;top:295px"></div>
<div class="t li" style="left:696.9px;top:307px">EX600-DY#E</div>
<div class="dh" style="left:685px;top:315px"></div>
<div class="t li" style="left:696.9px;top:327px">EX600-DY#F</div>
<div class="dh" style="left:685px;top:335px"></div>
<div class="t li" style="left:696.9px;top:347px">EX600-DM#E</div>
<div class="dh" style="left:685px;top:355px"></div>
<div class="t li" style="left:696.9px;top:367px">EX600-DM#F</div>
<div class="dh" style="left:685px;top:375px"></div>
<div class="t li" style="left:696.9px;top:387px">EX600-AXA</div>
<div class="dh" style="left:685px;top:395px"></div>
<div class="t li" style="left:696.9px;top:407px">EX600-AYA</div>
<div class="dh" style="left:685px;top:415px"></div>
<div class="t li" style="left:696.9px;top:427px">EX600-AMB</div>
<div class="dh" style="left:685px;top:435px"></div>
<div class="t li" style="left:696.9px;top:447px">EX600-SEC#, 8 Valves</div>
<div class="dh" style="left:685px;top:455px"></div>
<div class="t li" style="left:696.9px;top:467px">EX600-SEC#, 16 Valves</div>
<div class="dh" style="left:685px;top:475px"></div>
<div class="t li" style="left:696.9px;top:487px">EX600-SEC#, 24 Valves</div>
<div class="dh" style="left:685px;top:495px"></div>
<div class="t li" style="left:696.9px;top:507px">EX600-SEC#, 32 Valves</div>
<div class="dh" style="left:685px;top:515px"></div>
<div class="t li" style="left:696.9px;top:527px">System Diag.</div>
<div class="dh" style="left:685px;top:535px"></div>
<div class="t li" style="left:696.9px;top:547px">System/Slot Diag.</div>
<div class="dh" style="left:685px;top:555px"></div>
<div class="dv" style="left:685px;top:175px;height:381px"></div>
<div class="a btn" style="left:600px;top:315px;width:56px;height:34px"><svg class="a" style="left:-1px;top:-1px" width="56" height="34"><path d="M26.5 12 L21.5 16.6 L26.5 21.2 M34.3 12 L29.3 16.6 L34.3 21.2" fill="none" stroke="#000" stroke-width="1.1"/></svg></div>
<div class="a btn" style="left:600px;top:355px;width:56px;height:34px"><div class="t li" style="left:8.4px;top:8px">Delete</div></div>
<div class="a" style="left:278px;top:590px;width:13px;height:13px;border:1px solid #8e8f8f;background:#f4f4f4"><div class="a" style="left:1px;top:1px;width:9px;height:9px;border:1px solid #e8e8ea;background:linear-gradient(135deg,#c6cad2,#eeeff2)"></div></div>
<div class="t li" style="left:297px;top:588px;transform:scaleX(0.929)">Apply All</div>
</body></html>
